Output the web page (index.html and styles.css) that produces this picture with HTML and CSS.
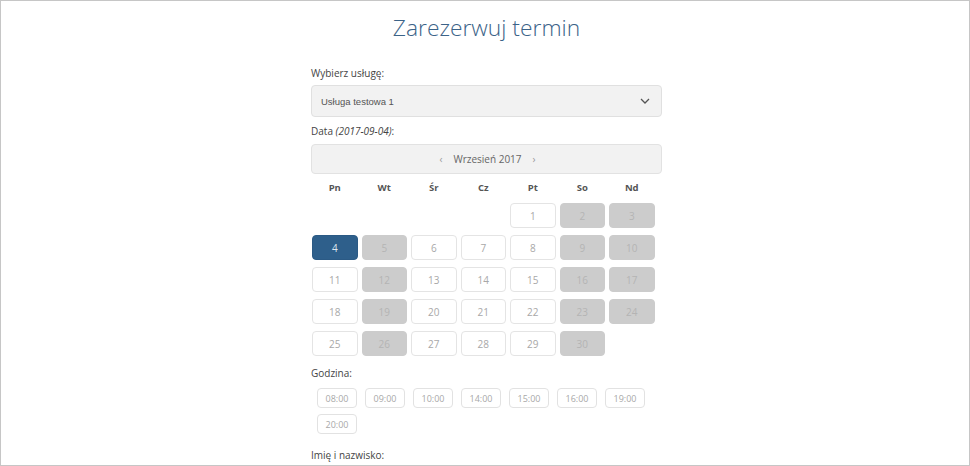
FILE: index.html
```html
<!DOCTYPE html>
<html lang="pl">
<head>
<meta charset="utf-8">
<title>Zarezerwuj termin</title>
<link rel="stylesheet" href="styles.css">
</head>
<body>
<div class="frame">
  <div class="wrap">
    <h1 class="title">Zarezerwuj termin</h1>

    <div class="label label-first">Wybierz usługę:</div>
    <div class="select">
      <span class="select-text">Usługa testowa 1</span>
      <svg class="chevron" width="10" height="6" viewBox="0 0 10 6"><path d="M1 1 L5 5 L9 1" fill="none" stroke="#555" stroke-width="1.3"/></svg>
    </div>

    <div class="label label-date">Data <em>(2017-09-04)</em>:</div>
    <div class="month">
      <span class="arrow">‹</span>
      <span class="month-name">Wrzesień 2017</span>
      <span class="arrow">›</span>
    </div>

    <div class="weekdays">
      <div>Pn</div><div>Wt</div><div>Śr</div><div>Cz</div><div>Pt</div><div>So</div><div>Nd</div>
    </div>

    <div class="days">
      <div class="empty"></div><div class="empty"></div><div class="empty"></div><div class="empty"></div>
      <div class="day">1</div><div class="day off">2</div><div class="day off">3</div>
      <div class="day sel">4</div><div class="day off">5</div><div class="day">6</div><div class="day">7</div><div class="day">8</div><div class="day off">9</div><div class="day off">10</div>
      <div class="day">11</div><div class="day off">12</div><div class="day">13</div><div class="day">14</div><div class="day">15</div><div class="day off">16</div><div class="day off">17</div>
      <div class="day">18</div><div class="day off">19</div><div class="day">20</div><div class="day">21</div><div class="day">22</div><div class="day off">23</div><div class="day off">24</div>
      <div class="day">25</div><div class="day off">26</div><div class="day">27</div><div class="day">28</div><div class="day">29</div><div class="day off">30</div>
    </div>

    <div class="label label-hour">Godzina:</div>
    <div class="times">
      <span class="time">08:00</span><span class="time">09:00</span><span class="time">10:00</span><span class="time">14:00</span><span class="time">15:00</span><span class="time">16:00</span><span class="time">19:00</span><span class="time">20:00</span>
    </div>

    <div class="label label-name">Imię i nazwisko:</div>
  </div>
</div>
</body>
</html>
```

FILE: styles.css
```css
html, body {
  margin: 0;
  padding: 0;
  background: #ffffff;
}

.frame {
  width: 970px;
  height: 466px;
  box-sizing: border-box;
  border: 1px solid #c6c6c6;
  overflow: hidden;
  font-family: "Open Sans", "DejaVu Sans", sans-serif;
}

.wrap {
  width: 351px;
  margin-left: 310px;
}

.title {
  margin: 13px 0 0 0;
  height: 28px;
  line-height: 28px;
  font-size: 22.8px;
  font-weight: 300;
  color: #3c6388;
  text-align: center;
  white-space: nowrap;
}

.label {
  font-size: 10px;
  line-height: 14px;
  height: 14px;
  font-weight: 500;
  color: #444;
}

.label em {
  font-style: italic;
}

.label-first { margin-top: 24px; }
.label-date { margin-top: 7px; }
.label-hour { margin-top: 10px; }
.label-name { margin-top: 11px; }

.select {
  margin-top: 5px;
  height: 32px;
  box-sizing: border-box;
  background: #f2f2f2;
  border: 1px solid #e0e0e0;
  border-radius: 4px;
  display: flex;
  align-items: center;
  justify-content: space-between;
  padding: 0 11px 0 9px;
}

.select-text {
  font-family: "Liberation Sans", Arial, sans-serif;
  font-size: 9.5px;
  color: #555;
}

.chevron {
  display: block;
}

.month {
  margin-top: 6px;
  height: 30px;
  box-sizing: border-box;
  background: #f2f2f2;
  border: 1px solid #e2e2e2;
  border-radius: 4px;
  display: flex;
  align-items: center;
  justify-content: center;
  gap: 11px;
  font-size: 10px;
  color: #666;
  padding-left: 2px;
}

.arrow {
  color: #999;
  font-size: 10px;
}

.weekdays {
  margin-top: 7px;
  margin-left: 1px;
  display: grid;
  grid-template-columns: repeat(7, 45.5px);
  column-gap: 4px;
  font-size: 9.5px;
  line-height: 14px;
  font-weight: 700;
  color: #555;
  text-align: center;
}

.days {
  margin-top: 8px;
  margin-left: 1px;
  display: grid;
  grid-template-columns: repeat(7, 45.5px);
  grid-auto-rows: 25px;
  column-gap: 4px;
  row-gap: 7px;
}

.day {
  box-sizing: border-box;
  border: 1px solid #e4e4e4;
  border-radius: 4px;
  background: #fff;
  display: flex;
  align-items: center;
  justify-content: center;
  font-size: 10px;
  color: #a8a8a8;
}

.day.off {
  background: #cccccc;
  border-color: #cccccc;
  color: #b4b4b4;
}

.day.sel {
  background: #2e5f8b;
  border-color: #2b5a85;
  color: #dfe7ef;
}

.times {
  margin-top: 5px;
  padding-left: 2px;
  display: flex;
  flex-wrap: wrap;
}

.time {
  width: 40px;
  height: 20px;
  margin: 3px 4px;
  box-sizing: border-box;
  border: 1px solid #e2e2e2;
  border-radius: 4px;
  display: flex;
  align-items: center;
  justify-content: center;
  font-size: 9px;
  color: #a8a8a8;
}
```
